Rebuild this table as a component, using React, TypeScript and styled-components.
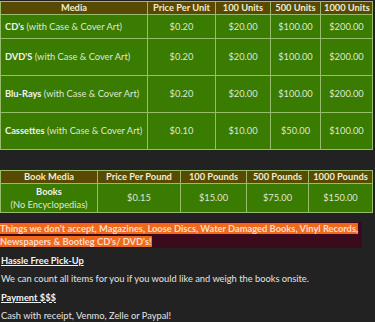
import React from "react";
import styled, { createGlobalStyle } from "styled-components";

const Global = createGlobalStyle`
  body {
    margin: 0;
    background: #222222;
    color: #e4e4e4;
    font-family: "Lato", "Open Sans", sans-serif;
    font-size: 9.3px;
  }
`;

const Styled = {
  Page: styled.div`
    padding-top: 1px;
  `,
  Table: styled.table<{ $mt?: number }>`
    border-collapse: collapse;
    margin-top: ${(p) => p.$mt || 0}px;
    table-layout: fixed;
    width: 372px;
    th,
    td {
      border: 1px solid #97bd6c;
      padding: 0 3px;
      text-align: center;
      white-space: nowrap;
      line-height: 12px;
    }
    th {
      background: #584a02;
      color: #f3ecd0;
      font-weight: 700;
      height: 11px;
    }
    td {
      background: #3a7b02;
      color: #dfe8d6;
    }
  `,
  Col: styled.col<{ $w: number }>`
    width: ${(p) => p.$w}px;
  `,
  Row: styled.tr<{ $h: number }>`
    height: ${(p) => p.$h}px;
  `,
  MediaCell: styled.td`
    && {
      text-align: left;
      padding-left: 4px;
    }
    b {
      font-weight: 700;
      color: #f2f2f2;
    }
  `,
  BookCell: styled.td`
    && {
      line-height: 13px;
    }
    b {
      color: #f2f2f2;
    }
  `,
  Banner: styled.p`
    margin: 9px 0 0;
    width: 362px;
    background: #3b0a1c;
    line-height: 13px;
    font-weight: 700;
    span {
      background: #f0691b;
      color: #ffdccb;
    }
  `,
  Heading: styled.p`
    margin: 5.5px 0;
    padding-left: 1px;
    line-height: 13px;
    font-weight: 700;
    color: #f2f2f2;
    text-decoration: underline;
  `,
  Text: styled.p`
    margin: 5.5px 0;
    padding-left: 1px;
    line-height: 13px;
  `,
};

const media = [
  { name: "CD's", price: "$0.20", u100: "$20.00", u500: "$100.00", u1000: "$200.00", h: 24 },
  { name: "DVD'S", price: "$0.20", u100: "$20.00", u500: "$100.00", u1000: "$200.00", h: 37 },
  { name: "Blu-Rays", price: "$0.20", u100: "$20.00", u500: "$100.00", u1000: "$200.00", h: 37 },
  { name: "Cassettes", price: "$0.10", u100: "$10.00", u500: "$50.00", u1000: "$100.00", h: 37 },
];

const App = () => {
  return (
    <Styled.Page>
      <Global />
      <Styled.Table>
        <colgroup>
          <Styled.Col $w={147} />
          <Styled.Col $w={68} />
          <Styled.Col $w={55} />
          <Styled.Col $w={50} />
          <Styled.Col $w={52} />
        </colgroup>
        <thead>
          <tr>
            <th>Media</th>
            <th>Price Per Unit</th>
            <th>100 Units</th>
            <th>500 Units</th>
            <th>1000 Units</th>
          </tr>
        </thead>
        <tbody>
          {media.map((m) => (
            <Styled.Row key={m.name} $h={m.h}>
              <Styled.MediaCell>
                <b>{m.name}</b> (with Case &amp; Cover Art)
              </Styled.MediaCell>
              <td>{m.price}</td>
              <td>{m.u100}</td>
              <td>{m.u500}</td>
              <td>{m.u1000}</td>
            </Styled.Row>
          ))}
        </tbody>
      </Styled.Table>

      <Styled.Table $mt={20}>
        <colgroup>
          <Styled.Col $w={97} />
          <Styled.Col $w={83} />
          <Styled.Col $w={66} />
          <Styled.Col $w={62} />
          <Styled.Col $w={64} />
        </colgroup>
        <thead>
          <tr>
            <th>Book Media</th>
            <th>Price Per Pound</th>
            <th>100 Pounds</th>
            <th>500 Pounds</th>
            <th>1000 Pounds</th>
          </tr>
        </thead>
        <tbody>
          <Styled.Row $h={29}>
            <Styled.BookCell>
              <b>Books</b>
              <br />
              (No Encyclopedias)
            </Styled.BookCell>
            <td>$0.15</td>
            <td>$15.00</td>
            <td>$75.00</td>
            <td>$150.00</td>
          </Styled.Row>
        </tbody>
      </Styled.Table>

      <Styled.Banner>
        <span>
          Things we don't accept, Magazines, Loose Discs, Water Damaged Books, Vinyl Records,
          Newspapers &amp; Bootleg CD's/ DVD's!
        </span>
      </Styled.Banner>

      <Styled.Heading>Hassle Free Pick-Up</Styled.Heading>
      <Styled.Text>We can count all items for you if you would like and weigh the books onsite.</Styled.Text>
      <Styled.Heading>Payment $$$</Styled.Heading>
      <Styled.Text>Cash with receipt, Venmo, Zelle or Paypal!</Styled.Text>
    </Styled.Page>
  );
};

export default App;
